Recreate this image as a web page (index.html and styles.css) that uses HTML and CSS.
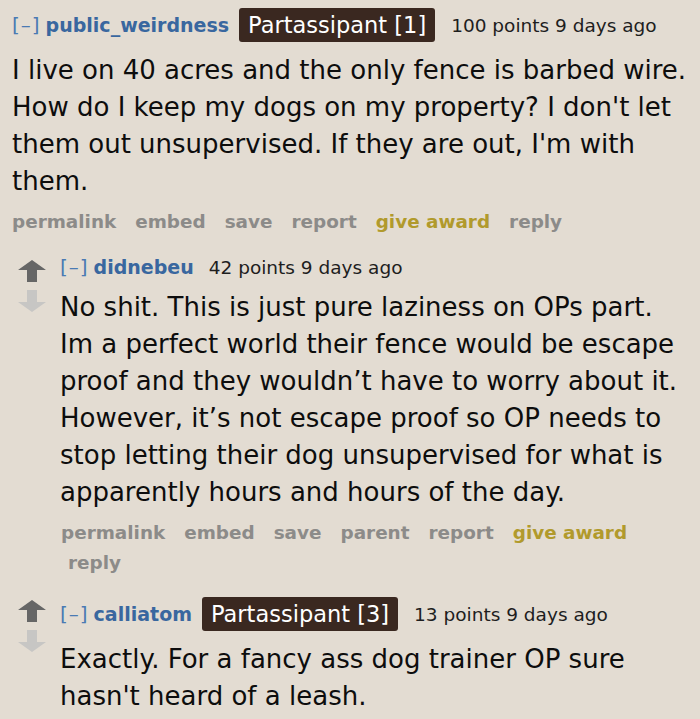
FILE: index.html
```html
<!DOCTYPE html>
<html>
<head>
<meta charset="utf-8">
<link rel="stylesheet" href="styles.css">
</head>
<body>
<div class="thread">
  <div class="comment top">
    <div class="tagline">
      <span class="expand">[–]</span>
      <span class="author">public_weirdness</span>
      <span class="flair">Partassipant [1]</span>
      <span class="meta">100 points 9 days ago</span>
    </div>
    <p class="text">I live on 40 acres and the only fence is barbed wire. How do I keep my dogs on my property? I don't let them out unsupervised. If they are out, I'm with them.</p>
    <ul class="buttons">
      <li>permalink</li><li>embed</li><li>save</li><li>report</li><li class="award">give award</li><li>reply</li>
    </ul>
  </div>

  <div class="comment child">
    <div class="votes">
      <svg class="arrow" viewBox="0 0 28 22" width="28" height="22"><path d="M14 0 L28 10 L19 10 L19 22 L9 22 L9 10 L0 10 Z" fill="#666"/></svg>
      <svg class="arrow" viewBox="0 0 28 22" width="28" height="22"><path d="M14 22 L28 12 L19 12 L19 0 L9 0 L9 12 L0 12 Z" fill="#c7c6c4"/></svg>
    </div>
    <div class="entry">
      <div class="tagline small">
        <span class="expand">[–]</span>
        <span class="author">didnebeu</span>
        <span class="meta">42 points 9 days ago</span>
      </div>
      <p class="text">No shit. This is just pure laziness on OPs part. Im a perfect world their fence would be escape proof and they wouldn’t have to worry about it. However, it’s not escape proof so OP needs to stop letting their dog unsupervised for what is apparently hours and hours of the day.</p>
      <ul class="buttons">
        <li>permalink</li><li>embed</li><li>save</li><li>parent</li><li>report</li><li class="award">give award</li><li class="wrapped">reply</li>
      </ul>
    </div>
  </div>

  <div class="comment child last">
    <div class="votes">
      <svg class="arrow" viewBox="0 0 28 22" width="28" height="22"><path d="M14 0 L28 10 L19 10 L19 22 L9 22 L9 10 L0 10 Z" fill="#666"/></svg>
      <svg class="arrow" viewBox="0 0 28 22" width="28" height="22"><path d="M14 22 L28 12 L19 12 L19 0 L9 0 L9 12 L0 12 Z" fill="#c7c6c4"/></svg>
    </div>
    <div class="entry">
      <div class="tagline">
        <span class="expand">[–]</span>
        <span class="author">calliatom</span>
        <span class="flair">Partassipant [3]</span>
        <span class="meta">13 points 9 days ago</span>
      </div>
      <p class="text">Exactly. For a fancy ass dog trainer OP sure hasn't heard of a leash.</p>
    </div>
  </div>
</div>
</body>
</html>
```

FILE: styles.css
```css
html, body {
  margin: 0;
  padding: 0;
  background: #e3dcd2;
}
body {
  font-family: "DejaVu Sans", Verdana, sans-serif;
  color: #111;
  width: 700px;
  height: 719px;
  overflow: hidden;
}
.thread {
  padding: 8px 0 0 12px;
}
.comment.top {
  width: 680px;
}
.tagline {
  display: flex;
  align-items: center;
  height: 34px;
  white-space: nowrap;
}
.tagline.small {
  height: 26px;
}
.expand {
  color: #4a7ab3;
  font-size: 20px;
  margin-right: 5px;
  letter-spacing: 1px;
}
.author {
  color: #39679f;
  font-weight: bold;
  font-size: 19px;
  margin-right: 10px;
}
.flair {
  background: #3a2820;
  color: #fff;
  font-size: 22.5px;
  height: 34px;
  line-height: 34px;
  padding: 0 9px;
  border-radius: 3px;
  margin-right: 16px;
}
.meta {
  font-size: 18.5px;
  color: #1e1e1e;
  margin-left: 5px;
}
.flair + .meta {
  margin-left: 0;
}
.text {
  margin: 10px 0 0 0;
  font-size: 26px;
  line-height: 37px;
  color: #0d0d0d;
}
.buttons {
  list-style: none;
  margin: 7px 0 0 0;
  padding: 0;
  font-weight: bold;
  font-size: 18.4px;
  line-height: 30px;
  color: #8c8b89;
  display: flex;
  flex-wrap: wrap;
  column-gap: 19px;
}
.buttons .award {
  color: #b19a2c;
}
.comment.child {
  display: flex;
  margin-top: 17px;
}
.comment.child.last {
  margin-top: 19px;
}
.votes {
  width: 48px;
  flex: none;
  display: flex;
  flex-direction: column;
  align-items: flex-start;
  padding-left: 6px;
  padding-top: 6px;
  gap: 8px;
  box-sizing: border-box;
}
.last .votes {
  padding-top: 3px;
}
.arrow {
  display: block;
}
.entry {
  width: 625px;
}
.child .text {
  margin-top: 9px;
}
.last .text {
  margin-top: 10px;
}
.child .buttons {
  padding-left: 1px;
  margin-top: 7px;
}
.buttons .wrapped {
  padding-left: 7px;
}
```
